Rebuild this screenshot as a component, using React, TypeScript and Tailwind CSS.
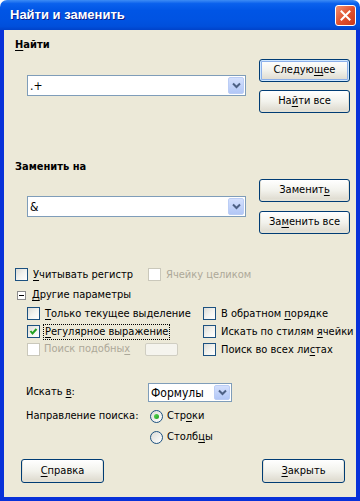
import React from "react";

const font = "font-['DejaVu_Sans_Condensed','DejaVu_Sans',sans-serif] [font-stretch:condensed]";

function M({ t, u }: { t: string; u?: number }) {
  if (u === undefined) return <>{t}</>;
  return (
    <>
      {t.slice(0, u)}
      <span className="underline underline-offset-[2px]">{t[u]}</span>
      {t.slice(u + 1)}
    </>
  );
}

function Button({ t, u, primary, className = "" }: { t: string; u?: number; primary?: boolean; className?: string }) {
  return (
    <div
      className={`flex items-center justify-center rounded-[3px] border border-[#003C74] bg-linear-to-b from-white via-[#F2F2EC] to-[#DCD8CC] text-[11px] text-black ${
        primary ? "shadow-[inset_0_0_0_1px_#CEE7FF,inset_0_0_0_2px_#8CB0EA]" : "shadow-[inset_0_-1px_0_1px_#E3E1D6]"
      } ${className}`}
    >
      <span>
        <M t={t} u={u} />
      </span>
    </div>
  );
}

function Chevron() {
  return (
    <svg width="9" height="7" viewBox="0 0 9 7">
      <polyline points="1,1.5 4.5,5 8,1.5" fill="none" stroke="#4D6185" strokeWidth="2" />
    </svg>
  );
}

function Combo({ value, className = "" }: { value: string; className?: string }) {
  return (
    <div className={`flex items-stretch border border-[#7F9DB9] bg-white ${className}`}>
      <div className="flex flex-1 items-center pl-[2px] text-[12px] text-black">{value}</div>
      <div className="m-[1px] flex w-[16px] items-center justify-center rounded-[2px] border border-[#BBCDF5] bg-linear-to-b from-[#D4E0FD] to-[#B2C7F6]">
        <Chevron />
      </div>
    </div>
  );
}

function Box({ checked, disabled }: { checked?: boolean; disabled?: boolean }) {
  return (
    <div
      className={`flex h-[13px] w-[13px] shrink-0 items-center justify-center border ${
        disabled
          ? "border-[#CAC8BB] bg-white"
          : "border-[#1C5180] bg-linear-to-br from-[#DCDCD7] via-[#F2F2EE] to-white"
      }`}
    >
      {checked && (
        <svg width="9" height="9" viewBox="0 0 9 9">
          <polyline points="1.5,4 3.5,6.5 7.5,2" fill="none" stroke="#21A121" strokeWidth="2" />
        </svg>
      )}
    </div>
  );
}

function Check({ t, u, checked, disabled, focus }: { t: string; u?: number; checked?: boolean; disabled?: boolean; focus?: boolean }) {
  return (
    <div className="flex h-[13px] items-center">
      <Box checked={checked} disabled={disabled} />
      <span
        className={`ml-[3px] px-[1px] text-[11px] leading-[14px] ${disabled ? "text-[#ACA899]" : "text-black"} ${
          focus ? "border border-dotted border-black" : "border border-transparent"
        }`}
      >
        <M t={t} u={u} />
      </span>
    </div>
  );
}

function Radio({ t, u, checked }: { t: string; u?: number; checked?: boolean }) {
  return (
    <div className="flex h-[13px] items-center">
      <div className="flex h-[13px] w-[13px] items-center justify-center rounded-full border border-[#1C5180] bg-linear-to-br from-[#DCDCD7] to-white">
        {checked && <div className="h-[5px] w-[5px] rounded-full bg-linear-to-br from-[#55D551] to-[#21A121]" />}
      </div>
      <span className="ml-[4px] text-[11px] text-black">
        <M t={t} u={u} />
      </span>
    </div>
  );
}

export default function App() {
  return (
    <div className={`h-[501px] w-[360px] bg-white ${font}`}>
      <div className="flex h-full flex-col overflow-hidden rounded-t-[7px]">
        <div className="flex h-[30px] shrink-0 items-center bg-[linear-gradient(to_bottom,#3D8CF5_0%,#0A61ED_12%,#0055E5_35%,#0053E2_65%,#004FDB_88%,#0042C9_100%)] pl-[10px] pr-[4px]">
          <span className="flex-1 font-['Liberation_Sans',sans-serif] text-[13px] font-bold text-white [text-shadow:1px_1px_0_#0A1E8C]">
            Найти и заменить
          </span>
          <div className="flex h-[21px] w-[21px] items-center justify-center rounded-[3px] border border-white bg-linear-to-br from-[#F09070] via-[#E0522F] to-[#C8391A]">
            <svg width="11" height="11" viewBox="0 0 11 11">
              <path d="M1.5 1.5 L9.5 9.5 M9.5 1.5 L1.5 9.5" stroke="white" strokeWidth="2" strokeLinecap="square" />
            </svg>
          </div>
        </div>

        <div className="flex flex-1 flex-col border-x-4 border-b-4 border-[#0831D9] bg-[#ECE9D8] text-black">
          {/* find */}
          <div className="flex pl-[11px] pr-[6px]">
            <div className="flex-1 pt-[8px]">
              <div className="h-[13px] text-[11px] font-bold leading-[13px]">
                <M t="Найти" u={0} />
              </div>
              <Combo value=".+" className="ml-[12px] mt-[24px] h-[21px] w-[219px]" />
            </div>
            <div className="flex w-[91px] flex-col gap-[8px] pt-[29px]">
              <Button t="Следующее" u={6} primary className="h-[23px]" />
              <Button t="Найти все" u={2} className="h-[23px]" />
            </div>
          </div>

          {/* replace */}
          <div className="mt-[45px] flex pl-[11px] pr-[6px]">
            <div className="flex-1 pt-[2px]">
              <div className="h-[13px] text-[11px] font-bold leading-[13px]">Заменить на</div>
              <Combo value="&" className="ml-[12px] mt-[23px] h-[21px] w-[219px]" />
            </div>
            <div className="flex w-[91px] flex-col gap-[9px] pt-[21px]">
              <Button t="Заменить" u={7} className="h-[23px]" />
              <Button t="Заменить все" u={2} className="h-[23px]" />
            </div>
          </div>

          {/* options */}
          <div className="mt-[34px] flex pl-[11px]">
            <div className="w-[133px]">
              <Check t="Учитывать регистр" u={0} />
            </div>
            <Check t="Ячейку целиком" disabled />
          </div>

          <div className="mt-[8px] flex h-[13px] items-center pl-[13px]">
            <div className="flex h-[9px] w-[9px] items-center justify-center border border-[#8C8C8C] bg-white">
              <div className="h-[1px] w-[5px] bg-black" />
            </div>
            <span className="ml-[6px] text-[11px]">
              <M t="Другие параметры" u={0} />
            </span>
          </div>

          <div className="mt-[5px] flex pl-[23px]">
            <div className="flex w-[176px] flex-col gap-[5px]">
              <Check t="Только текущее выделение" u={0} />
              <Check t="Регулярное выражение" u={0} checked focus />
              <div className="flex h-[13px] items-center">
                <Box disabled />
                <span className="ml-[4px] w-[101px] text-[11px] text-[#ACA899]">
                  <M t="Поиск подобных" u={13} />
                </span>
                <div className="h-[13px] w-[33px] rounded-[2px] border border-[#D0CEC2] bg-[#F5F4EE]" />
              </div>
            </div>
            <div className="flex flex-col gap-[5px]">
              <Check t="В обратном порядке" u={11} />
              <Check t="Искать по стилям ячейки" u={17} />
              <Check t="Поиск во всех листах" u={16} />
            </div>
          </div>

          <div className="mt-[27px] flex items-center pl-[22px]">
            <span className="w-[122px] text-[11px]">
              <M t="Искать в:" u={7} />
            </span>
            <Combo value="Формулы" className="h-[19px] w-[84px]" />
          </div>

          <div className="mt-[6px] flex items-center pl-[22px]">
            <span className="w-[124px] text-[11px]">Направление поиска:</span>
            <Radio t="Строки" u={3} checked />
          </div>
          <div className="mt-[6px] pl-[146px]">
            <Radio t="Столбцы" u={5} />
          </div>

          <div className="mt-auto flex justify-between pb-[14px] pl-[17px] pr-[11px]">
            <Button t="Справка" u={0} className="h-[24px] w-[83px]" />
            <Button t="Закрыть" u={0} className="h-[24px] w-[83px]" />
          </div>
        </div>
      </div>
    </div>
  );
}
